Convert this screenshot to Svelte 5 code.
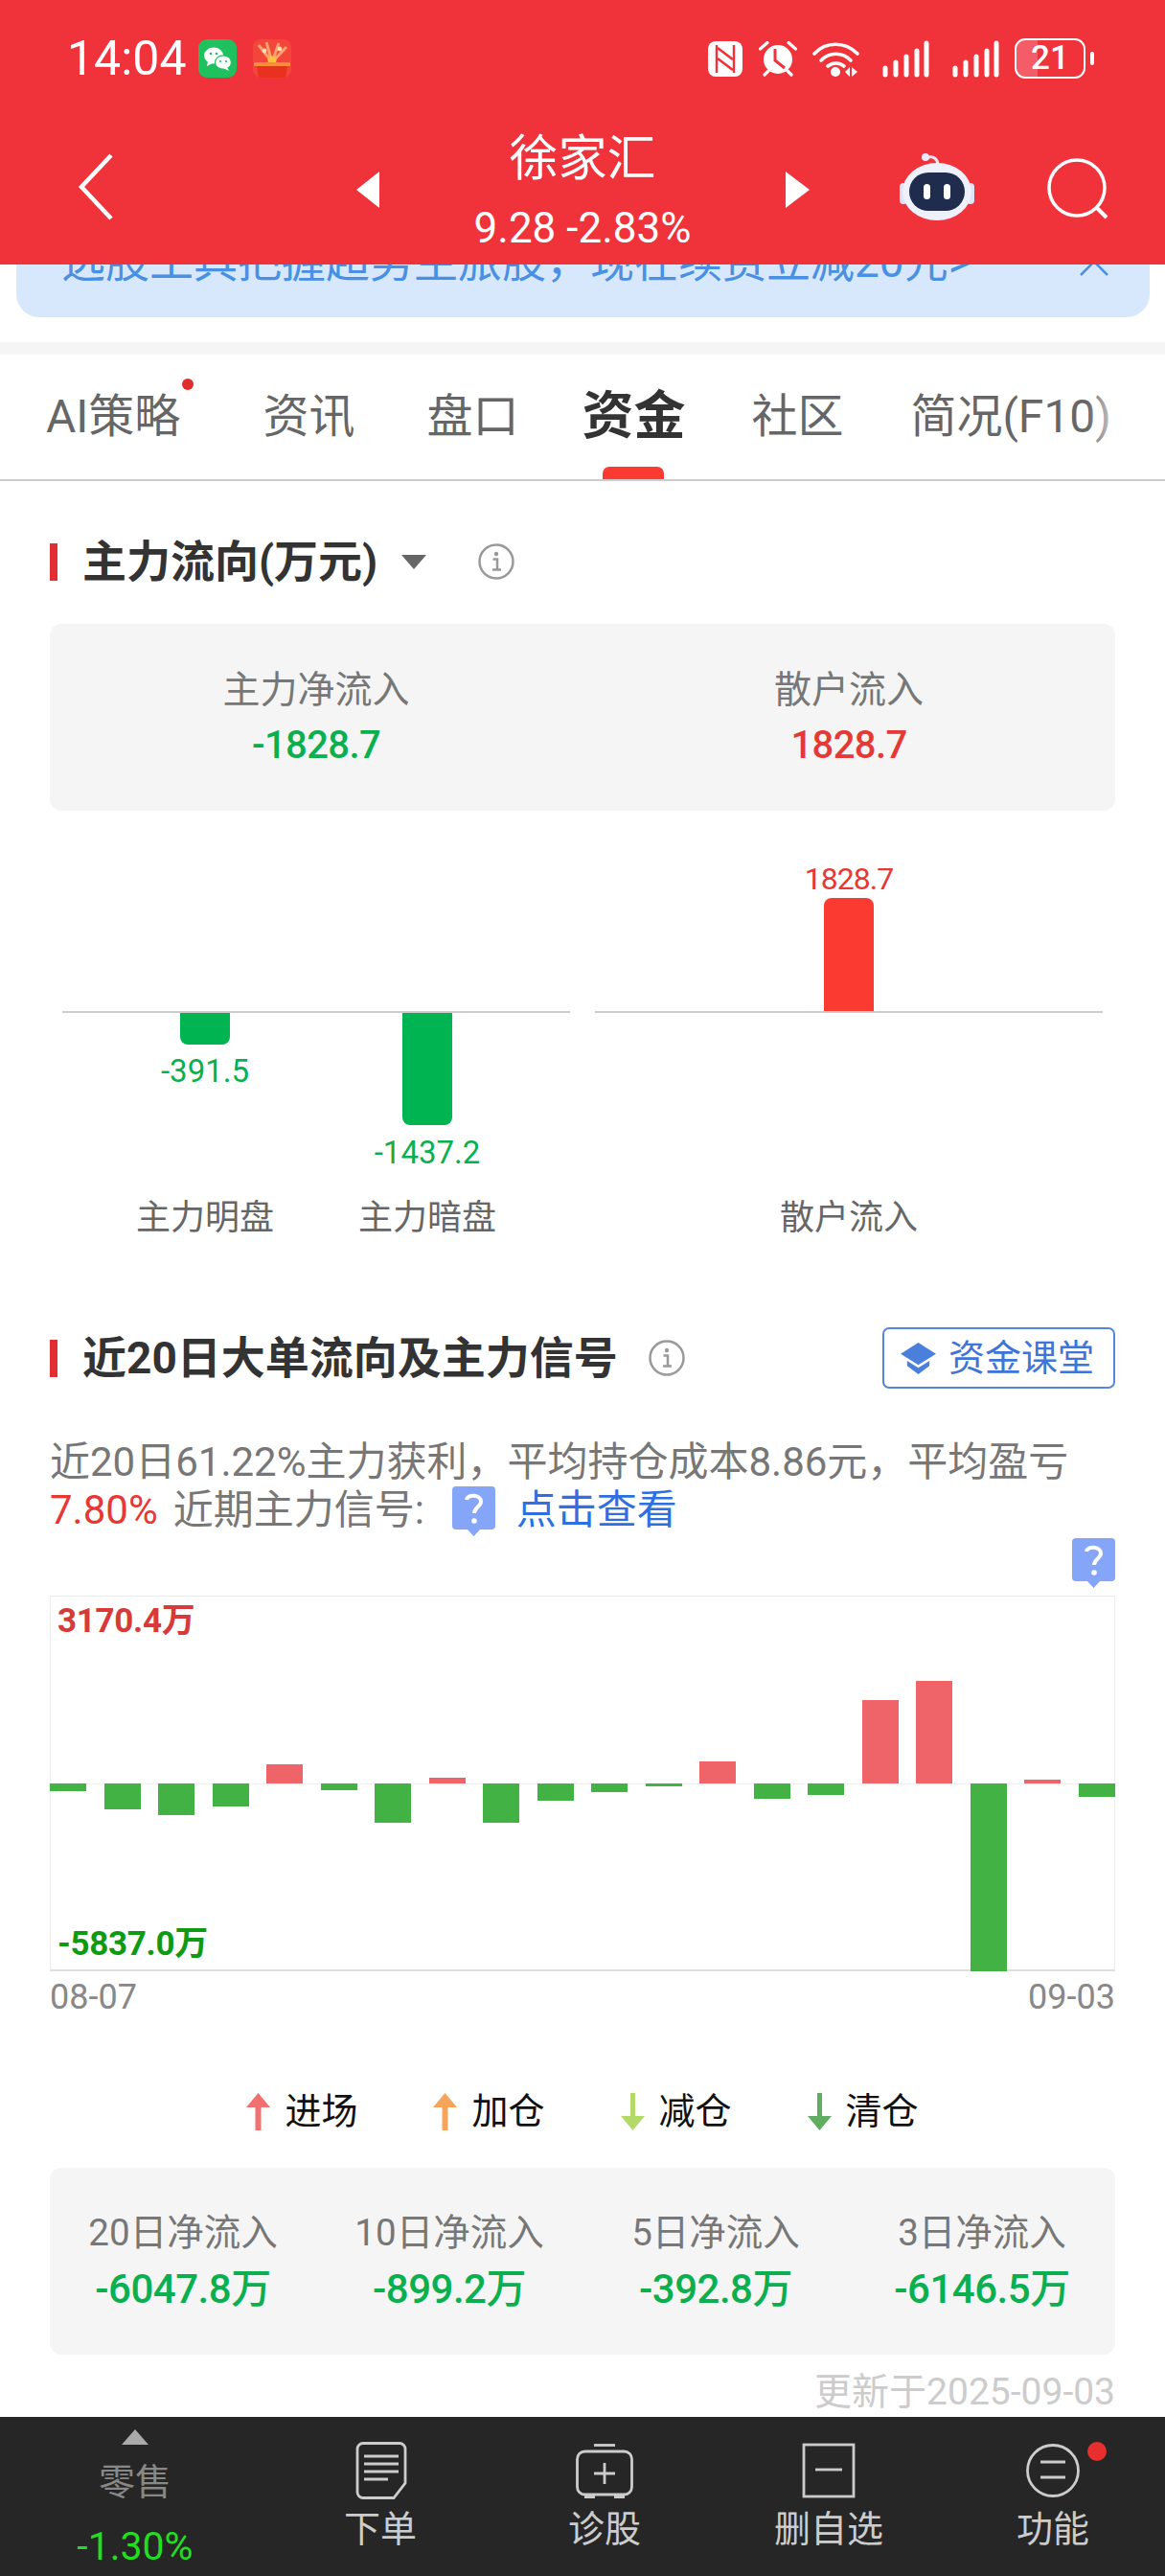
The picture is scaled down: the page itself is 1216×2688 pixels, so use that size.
<script>
  const tabs = ['资讯', '盘口', '资金', '社区', '简况(F10)'];
  const bars = [-7.7, -27, -32.7, -24.3, 20, -6.7, -40.7, 6, -41.3, -18.3, -8.7, -3.3, 22.7, -15.7, -12.3, 87, 106.7, -196, 4, -14.3];
  const legend = [
    { t: '进场', c: '#f27070', up: true },
    { t: '加仓', c: '#f7a55c', up: true },
    { t: '减仓', c: '#b4d968', up: false },
    { t: '清仓', c: '#61ad62', up: false }
  ];
  const periods = [
    { l: '20日净流入', v: '-6047.8万' },
    { l: '10日净流入', v: '-899.2万' },
    { l: '5日净流入', v: '-392.8万' },
    { l: '3日净流入', v: '-6146.5万' }
  ];
</script>

<div class="page">
  <header class="header">
    <div class="status">
      <span class="time">14:04</span>
      <svg class="wechat" viewBox="0 0 40 40" aria-hidden="true">
        <rect width="40" height="40" rx="9" fill="#1fc15f" />
        <ellipse cx="16" cy="17" rx="10" ry="8.500" fill="#fff" />
        <path d="M10 23l-1 5 6-3z" fill="#fff" />
        <ellipse cx="26" cy="24" rx="8.500" ry="7.200" stroke="#1fc15f" stroke-width="1.200" fill="#fff" />
        <path d="M30 29l2 4-6-3z" fill="#fff" />
        <circle cx="13" cy="15" r="1.300" fill="#1fc15f" /><circle cx="19" cy="15" r="1.300" fill="#1fc15f" />
        <circle cx="23" cy="23" r="1.100" fill="#1fc15f" /><circle cx="29" cy="23" r="1.100" fill="#1fc15f" />
      </svg>
      <svg class="gift" viewBox="0 0 40 40" aria-hidden="true">
        <rect width="40" height="40" rx="8" fill="#f4453a" />
        <path d="M20 24L6 6M20 24L14 3M20 24L27 4M20 24L35 8" stroke="#ffa36b" stroke-width="3" />
        <circle cx="12" cy="12" r="2.400" fill="#ffe0b0" /><circle cx="28" cy="10" r="2.400" fill="#ffe0b0" />
        <circle cx="20" cy="22" r="4.500" fill="#ffc23d" />
        <rect x="1" y="24" width="38" height="4" rx="1" fill="#ff8a3c" />
        <path d="M4 28h32l-2 12H6z" fill="#e8321f" />
      </svg>
      <div class="status-right">
        <svg class="nfc" viewBox="0 0 36 37" aria-hidden="true">
          <rect width="36" height="37" rx="8" fill="#fff" />
          <path d="M9 4v29M27 4v29" stroke="#f0323a" stroke-width="2.400" />
          <path d="M10 7l16 12M10 18l16 12" stroke="#f0323a" stroke-width="2.600" />
        </svg>
        <svg class="alarm" viewBox="0 0 40 38" aria-hidden="true">
          <circle cx="20" cy="20" r="15" fill="#fff" />
          <path d="M17 9v12l10 8" fill="none" stroke="#f0323a" stroke-width="3" />
          <path d="M1.500 9L9 2.500M38.500 9L31 2.500M6 36l4-4M34 36l-4-4" stroke="#fff" stroke-width="3.200" stroke-linecap="round" />
        </svg>
        <svg class="wifi" viewBox="0 0 49 39" aria-hidden="true">
          <g fill="none" stroke="#fff" stroke-width="3.600" stroke-linecap="round">
            <path d="M2 14C14 1 34 1 47 14" /><path d="M9 21c9-9 22-9 31 0" /><path d="M16 27c5-4 12-4 17 0" />
          </g>
          <circle cx="24" cy="33" r="5" fill="#fff" />
          <path d="M34 33l5-5v10zM41 28l6 5-6 5z" fill="#fff" />
        </svg>
        {#each [0, 1] as s (s)}
          <svg class="signal" viewBox="0 0 49 39" aria-hidden="true">
            <g stroke="#fff" stroke-width="5" stroke-linecap="round">
              <path d="M3 29v7M14 23v13M25 17v19M36 11v25M46 3v33" />
            </g>
          </svg>
        {/each}
        <div class="battery"><span>21</span></div>
        <i class="nub"></i>
      </div>
    </div>
    <div class="toolbar">
      <svg class="back" viewBox="0 0 38 70" aria-hidden="true">
        <path d="M35 2L4 35l31 33" fill="none" stroke="#fff" stroke-width="4.500" />
      </svg>
      <i class="tri-left"></i>
      <div class="stock">
        <div class="stock-name">徐家汇</div>
        <div class="stock-price">9.28 -2.83%</div>
      </div>
      <i class="tri-right"></i>
      <svg class="robot" viewBox="0 0 78 72" aria-hidden="true">
        <path d="M28 6c6-3 11 0 12 6" fill="none" stroke="#e6e6f5" stroke-width="3" />
        <circle cx="27" cy="5" r="4" fill="#eceafa" />
        <rect x="0" y="32" width="8" height="22" rx="4" fill="#dfe3f6" />
        <rect x="70" y="32" width="8" height="22" rx="4" fill="#dfe3f6" />
        <ellipse cx="39" cy="41" rx="36" ry="30" fill="#eef0fb" />
        <rect x="10" y="21" width="58" height="40" rx="20" fill="#1f2c4e" />
        <rect x="25" y="33" width="7" height="16" rx="3.500" fill="#fff" />
        <rect x="46" y="33" width="7" height="16" rx="3.500" fill="#fff" />
      </svg>
      <svg class="search" viewBox="0 0 64 64" aria-hidden="true">
        <circle cx="31" cy="31" r="29" fill="none" stroke="#fff" stroke-width="3.500" />
        <path d="M51 51l11 11" stroke="#fff" stroke-width="4" />
      </svg>
    </div>
  </header>

  <main class="main">
    <div class="banner">
      <span class="banner-text">选股工具把握超势主旅股，现在续费立减20元&gt;</span>
      <svg class="banner-close" viewBox="0 0 30 30" aria-hidden="true">
        <path d="M1 1l28 28M29 1L1 29" stroke="#4a90e2" stroke-width="2.500" />
      </svg>
    </div>
    <div class="gap"></div>

    <nav class="tabs">
      <span class="tab ai">AI策略<i class="tab-dot"></i></span>
      {#each tabs as t (t)}
        <span class="tab" class:active={t === '资金'}>{t}</span>
      {/each}
    </nav>

    <section class="content">
      <div class="head first">
        <i class="head-bar"></i>
        <h2>主力流向(万元)</h2>
        <i class="caret"></i>
        <svg class="info info-a" viewBox="0 0 38 38" aria-hidden="true">
          <circle cx="19" cy="19" r="17.500" fill="none" stroke="#999" stroke-width="2.500" />
          <circle cx="19" cy="11" r="2.200" fill="#999" />
          <path d="M15.500 16.500H20V27M15 27.500h9" fill="none" stroke="#999" stroke-width="2.500" />
        </svg>
      </div>

      <div class="card two">
        <div class="stat"><div class="stat-label">主力净流入</div><div class="stat-value green">-1828.7</div></div>
        <div class="stat"><div class="stat-label">散户流入</div><div class="stat-value red">1828.7</div></div>
      </div>

      <div class="flow">
        <div class="panel">
          <div class="row up"></div>
          <div class="axis"></div>
          <div class="row down">
            <div class="slot"><i class="bar b-green short"></i><span class="bar-val green one">-391.5</span></div>
            <div class="slot"><i class="bar b-green tall"></i><span class="bar-val green two-v">-1437.2</span></div>
          </div>
          <div class="row names"><span class="slot">主力明盘</span><span class="slot">主力暗盘</span></div>
        </div>
        <div class="panel">
          <div class="row up">
            <div class="slot"><span class="bar-val red">1828.7</span><i class="bar b-red"></i></div>
          </div>
          <div class="axis"></div>
          <div class="row down"></div>
          <div class="row names"><span class="slot">散户流入</span></div>
        </div>
      </div>

      <div class="head second">
        <i class="head-bar"></i>
        <h2>近20日大单流向及主力信号</h2>
        <svg class="info info-b" viewBox="0 0 38 38" aria-hidden="true">
          <circle cx="19" cy="19" r="17.500" fill="none" stroke="#999" stroke-width="2.500" />
          <circle cx="19" cy="11" r="2.200" fill="#999" />
          <path d="M15.500 16.500H20V27M15 27.500h9" fill="none" stroke="#999" stroke-width="2.500" />
        </svg>
        <div class="lesson">
          <svg class="cap" viewBox="0 0 38 34" aria-hidden="true">
            <path d="M19 0l19 12-19 12L0 12z" fill="#4a80dc" />
            <path d="M7 19.500l12 7.500 12-7.500V25L19 34 7 25z" fill="#4a80dc" />
          </svg>
          <span>资金课堂</span>
        </div>
      </div>

      <div class="para">
        <div class="line">近20日61.22%主力获利，平均持仓成本8.86元，平均盈亏</div>
        <div class="line">
          <span class="red">7.80%</span>
          <span class="after-pct">近期主力信号:</span>
          <svg class="qmark inline" viewBox="0 0 45 52" aria-hidden="true">
            <path d="M4 0h37a4 4 0 0 1 4 4v37a4 4 0 0 1-4 4H29l-6.500 7L16 45H4a4 4 0 0 1-4-4V4a4 4 0 0 1 4-4z" fill="#85a5f8" />
            <path d="M15 14c1-6 15-6 15 2 0 5-7 6-7 12" fill="none" stroke="#fff" stroke-width="4" />
            <circle cx="23" cy="36" r="2.800" fill="#fff" />
          </svg>
          <span class="link">点击查看</span>
        </div>
      </div>

      <div class="q-row">
        <svg class="qmark" viewBox="0 0 45 52" aria-hidden="true">
          <path d="M4 0h37a4 4 0 0 1 4 4v37a4 4 0 0 1-4 4H29l-6.500 7L16 45H4a4 4 0 0 1-4-4V4a4 4 0 0 1 4-4z" fill="#85a5f8" />
          <path d="M15 14c1-6 15-6 15 2 0 5-7 6-7 12" fill="none" stroke="#fff" stroke-width="4" />
          <circle cx="23" cy="36" r="2.800" fill="#fff" />
        </svg>
      </div>

      <div class="chart">
        <div class="plot">
          {#each bars as b, i (i)}
            <div class="col">
              <div class="col-up">{#if b > 0}<i class="cbar pos" style="height:{b}px"></i>{/if}</div>
              <div class="col-down">{#if b < 0}<i class="cbar neg" style="height:{-b}px"></i>{/if}</div>
            </div>
          {/each}
        </div>
        <span class="max">3170.4万</span>
        <span class="min">-5837.0万</span>
      </div>
      <div class="dates"><span>08-07</span><span>09-03</span></div>

      <div class="legend">
        {#each legend as l (l.t)}
          <div class="leg">
            <svg class="leg-arrow" viewBox="0 0 25 39" aria-hidden="true">
              {#if l.up}
                <path d="M12.500 0L25 15H15.500V39H9.500V15H0z" fill={l.c} />
              {:else}
                <path d="M12.500 39L25 24H15V0H10V24H0z" fill={l.c} />
              {/if}
            </svg>
            <span>{l.t}</span>
          </div>
        {/each}
      </div>

      <div class="card four">
        {#each periods as p (p.l)}
          <div class="stat"><div class="p-label">{p.l}</div><div class="p-value green">{p.v}</div></div>
        {/each}
      </div>

      <div class="updated">更新于2025-09-03</div>
    </section>
  </main>

  <footer class="nav">
    <div class="nav-item first-item">
      <i class="nav-tri"></i>
      <span class="sector">零售</span>
      <span class="pct">-1.30%</span>
    </div>
    <div class="nav-item">
      <svg class="nav-icon" viewBox="0 0 60 60" aria-hidden="true">
        <path d="M12 1.500H50a6 6 0 0 1 6 6V43L44 58.500H12a6 6 0 0 1-6-6V7.500a6 6 0 0 1 6-6z" />
        <path d="M13 15h36M13 23h36M13 31h36M13 39h25" />
      </svg>
      <span class="nav-label">下单</span>
    </div>
    <div class="nav-item">
      <svg class="nav-icon" viewBox="0 0 60 60" aria-hidden="true">
        <path d="M19 3.500h22" />
        <rect x="1.500" y="10" width="57" height="45" rx="8" />
        <path d="M30 22v22M19 33h22" />
        <path class="feet" d="M9 55h11v4H9zM40 55h11v4H40z" />
      </svg>
      <span class="nav-label">诊股</span>
    </div>
    <div class="nav-item">
      <svg class="nav-icon" viewBox="0 0 60 60" aria-hidden="true">
        <rect x="4" y="3" width="52" height="54" />
        <path d="M16 29h28" />
      </svg>
      <span class="nav-label">删自选</span>
    </div>
    <div class="nav-item">
      <svg class="nav-icon" viewBox="0 0 60 60" aria-hidden="true">
        <circle cx="30" cy="30" r="26.500" />
        <path d="M17 21h26M17 37h26" />
      </svg>
      <i class="nav-dot"></i>
      <span class="nav-label">功能</span>
    </div>
  </footer>
</div>

<style>
  :global(body) { margin: 0; background: #fff; }
  .page {
    width: 1216px; height: 2688px; overflow: hidden;
    display: flex; flex-direction: column;
    font-family: Roboto, "Noto Sans CJK SC", sans-serif;
    color: #333;
  }
  i { display: block; font-style: normal; }
  h2 { margin: 0; font-size: 46px; line-height: 60px; font-weight: 700; color: #333; }
  .green { color: #0ab04f; }
  .red { color: #e53935; }

  /* header */
  .header { height: 276px; flex: none; background: #f0323a; color: #fff; }
  .status { height: 40px; padding: 41px 74px 0 70px; display: flex; align-items: center; }
  .time { font-size: 50px; line-height: 40px; width: 137px; }
  .wechat { width: 40px; height: 40px; }
  .gift { width: 40px; height: 40px; margin-left: 17px; }
  .status-right { margin-left: auto; display: flex; align-items: center; }
  .nfc { width: 36px; height: 37px; }
  .alarm { width: 40px; height: 38px; margin-left: 17px; }
  .wifi { width: 49px; height: 39px; margin-left: 16px; }
  .signal { width: 49px; height: 39px; margin-left: 24px; }
  .battery {
    width: 74px; height: 42px; margin-left: 16px; box-sizing: border-box;
    border: 2.500px solid #fff; border-radius: 11px;
    background: linear-gradient(90deg, #f45c67 32%, transparent 32%);
    display: flex; align-items: center; justify-content: center;
    font-size: 35px; line-height: 36px; font-weight: 500;
  }
  .nub { width: 4px; height: 14px; margin-left: 5px; background: #fff; border-radius: 2px; }

  .toolbar { height: 124px; margin-top: 55px; padding-left: 81px; display: flex; align-items: center; }
  .back { width: 38px; height: 70px; margin-top: -6px; }
  .tri-left, .tri-right { width: 0; height: 0; border-style: solid; border-color: transparent; }
  .tri-left { margin-left: 253px; border-width: 19px 24px 19px 0; border-right-color: #fff; }
  .tri-right { border-width: 19px 0 19px 25px; border-left-color: #fff; }
  .stock { width: 424px; text-align: center; padding-bottom: 2px; }
  .stock-name { font-size: 51px; line-height: 60px; }
  .stock-price { font-size: 44px; line-height: 40px; margin-top: 22px; }
  .robot { width: 78px; height: 72px; margin-left: 94px; margin-top: -6px; }
  .search { width: 64px; height: 64px; margin-left: 76px; margin-top: -2px; }

  /* body */
  .main { flex: 1; min-height: 0; }
  .banner {
    height: 55px; margin: 0 16px 0 17px; overflow: hidden;
    background: #d8e8fc; border-radius: 0 0 24px 24px;
    display: flex; align-items: flex-start; padding-left: 47px;
  }
  .banner-text { font-size: 46px; line-height: 30px; margin-top: -18px; color: #4a90e2; white-space: nowrap; }
  .banner-close { width: 30px; height: 30px; margin-left: auto; margin-right: 43px; margin-top: -18px; flex: none; }
  .gap { height: 13px; margin-top: 26px; background: #f5f5f5; }

  .tabs {
    position: relative;
    height: 130px; border-bottom: 2px solid #ccc;
    padding-left: 48px; display: flex; gap: 73px; align-items: center;
    font-size: 48px; color: #666; line-height: 60px;
  }
  .tabs::after {
    content: ""; position: absolute; left: 1135px; top: 30px; width: 30px; height: 70px;
    background: linear-gradient(90deg, rgba(255,255,255,0), rgba(255,255,255,.75));
  }
  .tab { position: relative; white-space: nowrap; }
  .tab.ai { margin-right: 13px; }
  .tab:nth-child(2) { margin-right: 2px; }
  .tab:nth-child(5) { margin-right: -3px; }
  .tab-dot { position: absolute; top: -10px; right: -14px; width: 12px; height: 12px; border-radius: 50%; background: #e22d2d; }
  .tab.active { font-size: 54px; font-weight: 700; color: #333; margin: 0 -4px 0 -7px; }
  .tab.active::after {
    content: ""; position: absolute; left: calc(50% - 32px); bottom: -35px;
    width: 64px; height: 13px; background: #fb3b32; border-radius: 7px 7px 0 0;
  }

  .content { padding: 0 52px; }
  .head { display: flex; align-items: center; }
  .head.first { margin-top: 54px; height: 60px; }
  .head.second { margin-top: 92px; height: 64px; }
  .head-bar { width: 8px; height: 39px; background: #e22d35; margin-right: 26px; }
  .caret { width: 0; height: 0; margin-left: 25px; border-style: solid; border-width: 15px 13px 0; border-color: #666 transparent transparent; }
  .info { width: 38px; height: 38px; }
  .info-a { margin-left: 54px; }
  .info-b { margin-left: 32px; }

  .card { background: #f5f5f5; border-radius: 12px; height: 195px; display: grid; box-sizing: border-box; padding-top: 44px; }
  .card.two { margin-top: 35px; grid-template-columns: 1fr 1fr; }
  .card.four { margin-top: 37px; grid-template-columns: repeat(4, 1fr); padding-top: 43px; }
  .stat { text-align: center; }
  .stat-label { font-size: 39px; line-height: 50px; color: #777; }
  .stat-value { font-size: 40px; line-height: 46px; margin-top: 10px; font-weight: 500; letter-spacing: -.6px; }
  .p-label { font-size: 38.500px; line-height: 50px; color: #777; white-space: nowrap; }
  .p-value { font-size: 42px; line-height: 46px; margin-top: 11px; font-weight: 500; letter-spacing: -.5px; }

  .flow { display: grid; grid-template-columns: 530px 530px; column-gap: 26px; padding: 0 13px; margin-top: 53px; }
  .row { display: flex; justify-content: center; }
  .up { height: 156px; }
  .up .slot { display: flex; flex-direction: column; justify-content: flex-end; align-items: center; }
  .axis { height: 2px; background: #ccc; }
  .down { height: 192px; }
  .down .slot { display: flex; flex-direction: column; align-items: center; }
  .slot { width: 232px; text-align: center; }
  .bar { width: 52px; }
  .b-green { background: #00b551; border-radius: 0 0 8px 8px; }
  .b-red { background: #fb3b32; border-radius: 8px 8px 0 0; height: 118px; }
  .short { height: 33px; }
  .tall { height: 117px; }
  .bar-val { font-size: 33px; line-height: 30px; }
  .up .bar-val { margin-bottom: 5px; font-size: 32px; letter-spacing: -1px; }
  .bar-val.one { margin-top: 13px; }
  .bar-val.two-v { margin-top: 14px; }
  .names { font-size: 36px; line-height: 44px; color: #666; }

  .lesson {
    margin-left: auto; width: 243px; height: 64px; box-sizing: border-box;
    border: 2px solid #5585dc; border-radius: 7px;
    display: flex; align-items: center; padding-left: 17px;
    font-size: 38px; color: #3f74d8; line-height: 50px;
  }
  .cap { width: 37px; height: 33px; margin-right: 13px; }

  .para { margin-top: 52px; font-size: 42px; line-height: 50px; color: #777; }
  .line { height: 50px; display: flex; align-items: center; white-space: nowrap; }
  .after-pct { margin-left: 16px; }
  .qmark { width: 45px; height: 52px; flex: none; }
  .qmark.inline { margin-left: 29px; margin-top: 2px; }
  .link { margin-left: 22px; color: #2f6fe0; }
  .q-row { display: flex; justify-content: flex-end; margin-top: 4px; }

  .chart { margin-top: 8px; height: 392px; position: relative; }
  .chart::before { content: ""; position: absolute; inset: 0; border: 1.500px solid #ececec; border-bottom: 2px solid #dedede; }
  .chart::after { content: ""; position: absolute; left: 0; right: 0; top: 196px; height: 1px; background: #f0f0f0; }
  .plot { position: relative; z-index: 1; height: 392px; display: flex; justify-content: space-between; }
  .col { width: 38px; }
  .col-up { height: 196px; display: flex; align-items: flex-end; }
  .col-down { height: 196px; }
  .cbar { width: 38px; }
  .pos { background: #ee6468; }
  .neg { background: #43b245; }
  .max, .min { position: absolute; z-index: 2; left: 8px; font-size: 35px; line-height: 40px; font-weight: 700; letter-spacing: -.3px; }
  .max { top: 7px; color: #d63a3a; }
  .min { bottom: 8px; color: #0f9a14; }
  .dates { display: flex; justify-content: space-between; margin-top: 5px; font-size: 36px; line-height: 44px; color: #888; }

  .legend { display: flex; justify-content: center; gap: 79px; margin-top: 75px; }
  .leg { display: flex; align-items: center; gap: 15px; font-size: 38px; line-height: 44px; color: #111; }
  .leg-arrow { width: 25px; height: 39px; }

  .updated { margin-top: 19px; text-align: right; font-size: 39px; line-height: 40px; color: #ccc; }

  /* bottom nav */
  .nav {
    height: 166px; flex: none; background: #262626; box-sizing: border-box;
    padding-left: 2px; display: grid; grid-template-columns: 278px repeat(4, 234px);
  }
  .nav-item { position: relative; display: flex; flex-direction: column; align-items: center; padding-top: 26px; }
  .first-item { padding-top: 13px; }
  .nav-tri { width: 0; height: 0; border-style: solid; border-width: 0 14.500px 16px; border-color: transparent transparent #aaa; }
  .sector { font-size: 38px; line-height: 44px; margin-top: 17px; color: #888; }
  .pct { font-size: 41px; line-height: 44px; margin-top: 23px; color: #22dd22; }
  .nav-icon { width: 60px; height: 60px; fill: none; stroke: #ccc; stroke-width: 2.800; }
  .feet { fill: #ccc; stroke: none; }
  .nav-label { font-size: 38px; line-height: 44px; margin-top: 9px; color: #ccc; }
  .nav-dot { position: absolute; top: 26px; left: 153px; width: 20px; height: 20px; border-radius: 50%; background: #e82f2f; }
</style>
